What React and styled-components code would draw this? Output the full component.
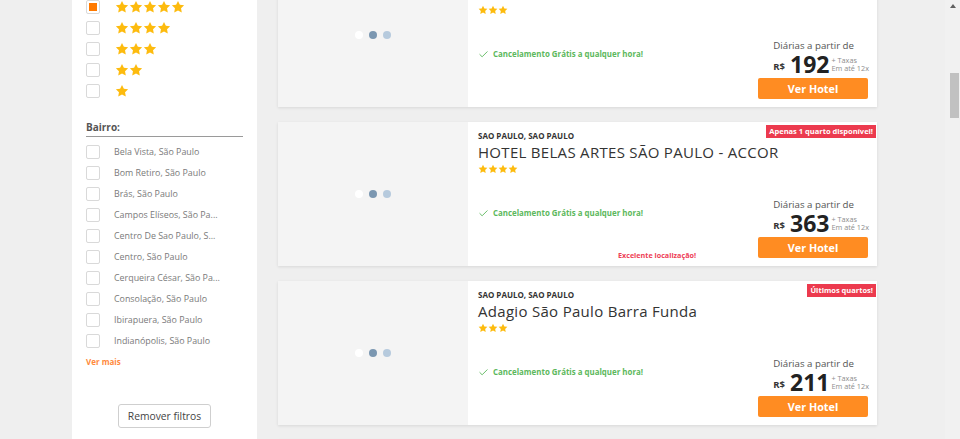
import React from 'react';
import styled, { createGlobalStyle } from 'styled-components';
import { Check } from 'lucide-react';

const GlobalStyle = createGlobalStyle`
  html, body {
    margin: 0;
    padding: 0;
    background: #efefef;
    font-family: "Open Sans", "Liberation Sans", sans-serif;
    overflow: hidden;
  }
  * { box-sizing: border-box; }
`;

const Page = styled.div`
  display: flex;
  height: 439px;
  overflow: hidden;
  background: #efefef;
`;

const Main = styled.div`
  flex: 1;
  display: flex;
  align-items: stretch;
  padding-left: 72px;
  margin-top: -37px;
  height: calc(100% + 37px);
`;

const Sidebar = styled.aside`
  width: 185px;
  flex-shrink: 0;
  background: #fff;
  padding: 33px 14px 0 14px;
  display: flex;
  flex-direction: column;
`;

const FilterRow = styled.label`
  display: flex;
  align-items: center;
  height: 21px;
  gap: ${p => p.$gap || 14}px;
  font-size: 8.9px;
  color: #7a7a7a;
  white-space: nowrap;
`;

const Box = styled.span`
  width: 14px;
  height: 14px;
  flex-shrink: 0;
  border: 1px solid #d9d9d9;
  border-radius: 2px;
  background: #fff;
  display: flex;
  align-items: center;
  justify-content: center;

  &::after {
    content: '';
    display: ${p => (p.$checked ? 'block' : 'none')};
    width: 8px;
    height: 8px;
    background: #ff7a00;
  }
`;

const StarLine = styled.span`
  display: flex;
  gap: ${p => p.$gap}px;
`;

const FilterTitle = styled.h4`
  margin: 19px 0 0;
  font-size: 10px;
  line-height: 14px;
  font-weight: 700;
  color: #555;
  padding-bottom: 2px;
  border-bottom: 1px solid #9a9a9a;
`;

const List = styled.div`
  margin-top: 4px;
  display: flex;
  flex-direction: column;
`;

const MoreLink = styled.a`
  margin-top: 5px;
  font-size: 8px;
  line-height: 12px;
  font-weight: 700;
  color: #ff8a3d;
`;

const ResetButton = styled.button`
  align-self: center;
  margin-top: 36px;
  height: 24px;
  width: 93px;
  border: 1px solid #cfcfcf;
  border-radius: 3px;
  background: #fff;
  color: #444;
  font-family: inherit;
  font-size: 10.3px;
  padding: 0;
`;

const Results = styled.section`
  width: 599px;
  margin-left: 21px;
  display: flex;
  flex-direction: column;
  gap: 15px;
`;

const Card = styled.article`
  display: flex;
  height: 144px;
  flex-shrink: 0;
  background: #fff;
  box-shadow: 0 1px 3px rgba(0, 0, 0, 0.1);
`;

const Photo = styled.div`
  width: 190px;
  flex-shrink: 0;
  background: #f4f4f4;
  display: flex;
  align-items: center;
  justify-content: center;
  gap: 6px;
`;

const Dot = styled.span`
  width: 8px;
  height: 8px;
  border-radius: 50%;
  background: ${p => p.$color};
`;

const Body = styled.div`
  flex: 1;
  position: relative;
  display: flex;
  flex-direction: column;
  padding: 9px 9px 8px 10px;
`;

const Badge = styled.span`
  position: absolute;
  top: 3px;
  right: 1px;
  height: 13px;
  line-height: 13px;
  padding: 0 3px;
  background: #ec3a4e;
  color: #fff;
  font-size: 7.5px;
  font-weight: 700;
`;

const Location = styled.div`
  font-size: 8px;
  line-height: 10px;
  font-weight: 700;
  color: #333;
`;

const Name = styled.h3`
  margin: 2px 0 0;
  font-size: 15px;
  line-height: 18px;
  letter-spacing: 0.3px;
  font-weight: 400;
  color: #333;
  white-space: nowrap;
`;

const CardStars = styled.div`
  margin-top: 3px;
`;

const Bottom = styled.div`
  margin-top: auto;
  display: flex;
  justify-content: space-between;
  align-items: stretch;
`;

const Perks = styled.div`
  display: flex;
  flex-direction: column;
  padding-top: 8px;
`;

const Cancel = styled.div`
  display: flex;
  align-items: center;
  gap: 4px;
  font-size: 7.9px;
  line-height: 12px;
  font-weight: 700;
  color: #5cb85c;
`;

const Highlight = styled.div`
  margin: auto 0 -2px 140px;
  font-size: 7.2px;
  line-height: 10px;
  font-weight: 700;
  color: #ee4056;
`;

const Buy = styled.div`
  width: 110px;
  display: flex;
  flex-direction: column;
`;

const PriceBlock = styled.div`
  align-self: flex-end;
  margin-right: -1px;
  display: flex;
  flex-direction: column;
`;

const FromText = styled.div`
  font-size: 9.7px;
  line-height: 12px;
  color: #555;
  white-space: nowrap;
`;

const PriceLine = styled.div`
  display: flex;
  align-items: center;
  height: 24px;
  white-space: nowrap;
`;

const Currency = styled.span`
  font-size: 9.5px;
  font-weight: 700;
  color: #333;
  margin-top: 4px;
  margin-right: 5px;
`;

const Amount = styled.span`
  font-size: 23px;
  line-height: 22px;
  font-weight: 700;
  color: #222;
  margin-right: 2px;
`;

const Fees = styled.span`
  display: flex;
  flex-direction: column;
  font-size: 7.3px;
  line-height: 8.5px;
  color: #8d8d8d;
`;

const HotelButton = styled.button`
  margin-top: 2px;
  height: 21px;
  border: none;
  border-radius: 2px;
  background: #ff8c22;
  color: #fff;
  font-family: inherit;
  font-size: 10.8px;
  font-weight: 700;
  padding: 0;
`;

const Scrollbar = styled.div`
  width: 15px;
  flex-shrink: 0;
  background: #f1f1f1;
  display: flex;
  flex-direction: column;
  align-items: center;
`;

const Arrow = styled.span`
  margin-top: 4px;
  width: 0;
  height: 0;
  border-left: 3.5px solid transparent;
  border-right: 3.5px solid transparent;
  border-bottom: 4px solid #606060;
`;

const Thumb = styled.span`
  margin-top: 65px;
  margin-left: 3px;
  width: 9px;
  height: 45px;
  background: #c1c1c1;
`;

function Star({ size }) {
  return (
    <svg width={size} height={size} viewBox="0 0 24 24">
      <path
        d="M12 1.5l3.2 6.6 7.3 1-5.3 5.1 1.3 7.2L12 18l-6.5 3.4 1.3-7.2L1.5 9.1l7.3-1z"
        fill="#fdbb0e"
      />
    </svg>
  );
}

function Stars({ count, size, gap }) {
  return (
    <StarLine $gap={gap}>
      {Array.from({ length: count }).map((_, i) => (
        <Star key={i} size={size} />
      ))}
    </StarLine>
  );
}

const neighbourhoods = [
  'Bela Vista, São Paulo',
  'Bom Retiro, São Paulo',
  'Brás, São Paulo',
  'Campos Elíseos, São Pa...',
  'Centro De Sao Paulo, S...',
  'Centro, São Paulo',
  'Cerqueira César, São Pa...',
  'Consolação, São Paulo',
  'Ibirapuera, São Paulo',
  'Indianópolis, São Paulo',
];

const hotels = [
  { name: 'HOTEL SÃO PAULO CENTRO', stars: 3, price: '192' },
  { name: 'HOTEL BELAS ARTES SÃO PAULO - ACCOR', stars: 4, price: '363', badge: 'Apenas 1 quarto disponível!', highlight: 'Excelente localização!' },
  { name: 'Adagio São Paulo Barra Funda', stars: 3, price: '211', badge: 'Últimos quartos!' },
  { name: 'Hotel Bourbon São Paulo', stars: 4, price: '245' },
];

function HotelCard({ hotel }) {
  return (
    <Card>
      <Photo>
        <Dot $color="#ffffff" />
        <Dot $color="#7b97b1" />
        <Dot $color="#b6cadd" />
      </Photo>
      <Body>
        {hotel.badge && <Badge>{hotel.badge}</Badge>}
        <Location>SAO PAULO, SAO PAULO</Location>
        <Name>{hotel.name}</Name>
        <CardStars>
          <Stars count={hotel.stars} size={10} gap={0} />
        </CardStars>
        <Bottom>
          <Perks>
            <Cancel>
              <Check size={11} color="#5cb85c" strokeWidth={2} />
              Cancelamento Grátis a qualquer hora!
            </Cancel>
            {hotel.highlight && <Highlight>{hotel.highlight}</Highlight>}
          </Perks>
          <Buy>
            <PriceBlock>
              <FromText>Diárias a partir de</FromText>
              <PriceLine>
                <Currency>R$</Currency>
                <Amount>{hotel.price}</Amount>
                <Fees>
                  <span>+ Taxas</span>
                  <span>Em até 12x</span>
                </Fees>
              </PriceLine>
            </PriceBlock>
            <HotelButton>Ver Hotel</HotelButton>
          </Buy>
        </Bottom>
      </Body>
    </Card>
  );
}

export default function App() {
  return (
    <>
      <GlobalStyle />
      <Page>
        <Main>
          <Sidebar>
            {[5, 4, 3, 2, 1].map(n => (
              <FilterRow key={n} $gap={15}>
                <Box $checked={n === 5} />
                <Stars count={n} size={14} gap={0} />
              </FilterRow>
            ))}
            <FilterTitle>Bairro:</FilterTitle>
            <List>
              {neighbourhoods.map(item => (
                <FilterRow key={item}>
                  <Box />
                  {item}
                </FilterRow>
              ))}
            </List>
            <MoreLink>Ver mais</MoreLink>
            <ResetButton>Remover filtros</ResetButton>
          </Sidebar>
          <Results>
            {hotels.map(h => (
              <HotelCard key={h.name} hotel={h} />
            ))}
          </Results>
        </Main>
        <Scrollbar>
          <Arrow />
          <Thumb />
        </Scrollbar>
      </Page>
    </>
  );
}
